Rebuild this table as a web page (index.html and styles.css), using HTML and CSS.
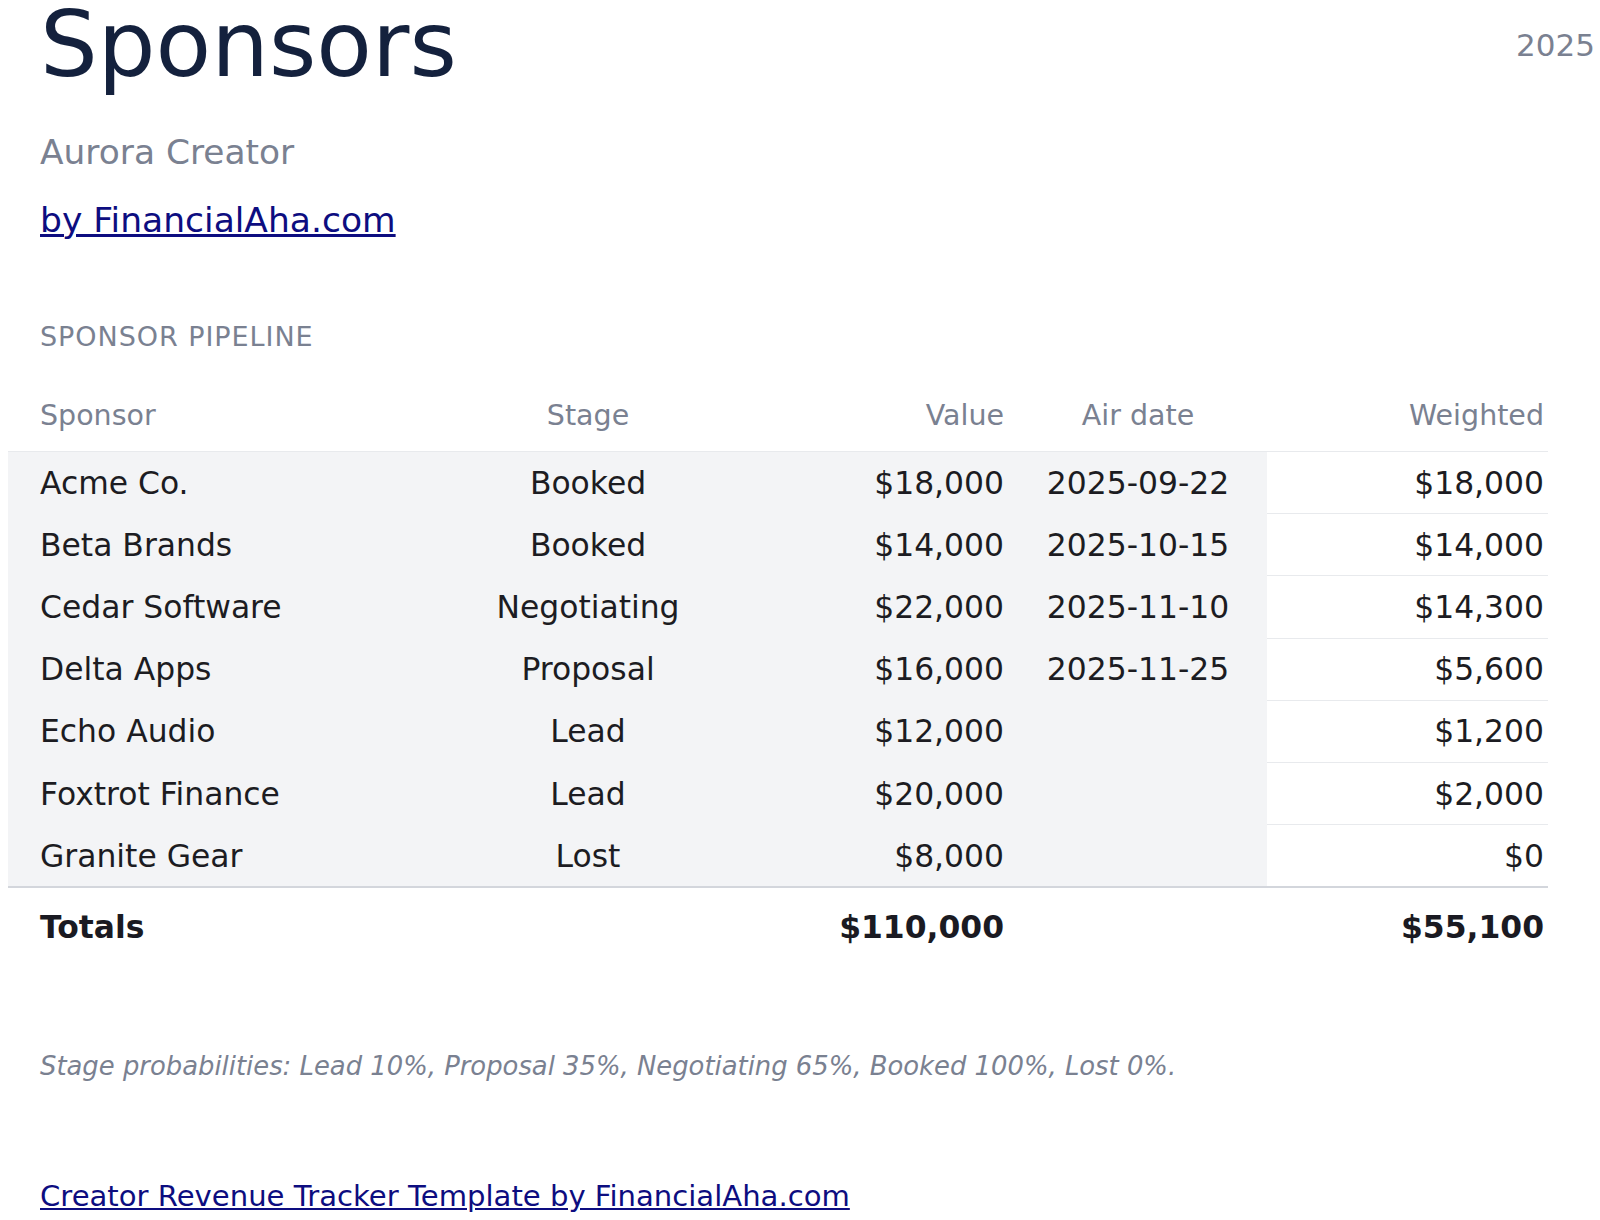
FILE: index.html
```html
<!DOCTYPE html>
<html lang="en">
<head>
<meta charset="utf-8">
<title>Sponsors</title>
<link rel="stylesheet" href="styles.css">
</head>
<body>
<div class="page">
  <header class="header">
    <h1 class="title">Sponsors</h1>
    <div class="year">2025</div>
  </header>
  <p class="subtitle">Aurora Creator</p>
  <p class="byline"><a href="#">by FinancialAha.com</a></p>

  <h2 class="section-label">SPONSOR PIPELINE</h2>
  <table class="pipeline">
    <colgroup>
      <col class="c-sponsor">
      <col class="c-stage">
      <col class="c-value">
      <col class="c-date">
      <col class="c-weighted">
    </colgroup>
    <thead>
      <tr>
        <th class="left">Sponsor</th>
        <th class="center">Stage</th>
        <th class="right">Value</th>
        <th class="center">Air date</th>
        <th class="right last">Weighted</th>
      </tr>
    </thead>
    <tbody>
      <tr><td class="left shade">Acme Co.</td><td class="center shade">Booked</td><td class="right shade">$18,000</td><td class="center shade">2025-09-22</td><td class="right last">$18,000</td></tr>
      <tr><td class="left shade">Beta Brands</td><td class="center shade">Booked</td><td class="right shade">$14,000</td><td class="center shade">2025-10-15</td><td class="right last">$14,000</td></tr>
      <tr><td class="left shade">Cedar Software</td><td class="center shade">Negotiating</td><td class="right shade">$22,000</td><td class="center shade">2025-11-10</td><td class="right last">$14,300</td></tr>
      <tr><td class="left shade">Delta Apps</td><td class="center shade">Proposal</td><td class="right shade">$16,000</td><td class="center shade">2025-11-25</td><td class="right last">$5,600</td></tr>
      <tr><td class="left shade">Echo Audio</td><td class="center shade">Lead</td><td class="right shade">$12,000</td><td class="center shade"></td><td class="right last">$1,200</td></tr>
      <tr><td class="left shade">Foxtrot Finance</td><td class="center shade">Lead</td><td class="right shade">$20,000</td><td class="center shade"></td><td class="right last">$2,000</td></tr>
      <tr><td class="left shade">Granite Gear</td><td class="center shade">Lost</td><td class="right shade">$8,000</td><td class="center shade"></td><td class="right last">$0</td></tr>
    </tbody>
    <tfoot>
      <tr><td class="left">Totals</td><td></td><td class="right">$110,000</td><td></td><td class="right last">$55,100</td></tr>
    </tfoot>
  </table>

  <p class="note">Stage probabilities: Lead 10%, Proposal 35%, Negotiating 65%, Booked 100%, Lost 0%.</p>

  <p class="footer"><a href="#">Creator Revenue Tracker Template by FinancialAha.com</a></p>
</div>
</body>
</html>
```

FILE: styles.css
```css
html, body {
  margin: 0;
  padding: 0;
  background: #ffffff;
}

body {
  font-family: "DejaVu Sans", "Liberation Sans", sans-serif;
  color: #1c1c22;
  overflow: hidden;
}

.page {
  padding: 0 0 0 8px;
}

.header {
  display: flex;
  align-items: center;
  justify-content: space-between;
  margin-top: -8px;
  padding: 0 5px 0 32px;
}

.title {
  margin: 0;
  font-size: 91px;
  font-weight: normal;
  line-height: normal;
  color: #14213d;
}

.year {
  font-size: 31px;
  color: #7a8191;
}

.subtitle {
  margin: 34.5px 0 0 0;
  padding-left: 32px;
  font-size: 34.4px;
  color: #7a8191;
}

.byline {
  margin: 28px 0 0 0;
  padding-left: 32px;
  font-size: 34.5px;
}

.byline a,
.footer a {
  color: #0d0d80;
  text-decoration: underline;
}

.section-label {
  margin: 81px 0 0 0;
  padding-left: 32px;
  font-size: 27px;
  font-weight: normal;
  letter-spacing: 0.035em;
  color: #7a8191;
}

.pipeline {
  margin-top: 35.3px;
  width: 1540px;
  border-collapse: collapse;
  table-layout: fixed;
}

.c-sponsor { width: 416px; }
.c-stage { width: 328px; }
.c-value { width: 257px; }
.c-date { width: 258px; }
.c-weighted { width: 281px; }

.pipeline th {
  font-size: 28.5px;
  font-weight: normal;
  color: #7a8191;
  padding: 12.6px 5px 18.6px 5px;
  line-height: normal;
  border-bottom: 1px solid #e8eaed;
}

.pipeline td {
  font-size: 31.4px;
  line-height: 36px;
  padding: 12.6px 5px;
  white-space: nowrap;
  border-bottom: 1px solid #e8eaed;
}

.pipeline td.shade {
  background: #f3f4f6;
  border-bottom-color: #f3f4f6;
}

.pipeline .left { text-align: left; padding-left: 32px; }
.pipeline .center { text-align: center; }
.pipeline .right { text-align: right; }
.pipeline .last { padding-right: 4px; }

.pipeline tfoot td {
  font-weight: bold;
  color: #1a1a22;
  padding-top: 21px;
  padding-bottom: 21px;
  border-top: 2px solid #d3d6dc;
  border-bottom: none;
}

.note {
  margin: 85px 0 0 0;
  padding-left: 32px;
  font-size: 25.85px;
  font-style: italic;
  color: #7a8191;
}

.footer {
  margin: 98px 0 0 0;
  padding-left: 32px;
  font-size: 29.1px;
}
```
